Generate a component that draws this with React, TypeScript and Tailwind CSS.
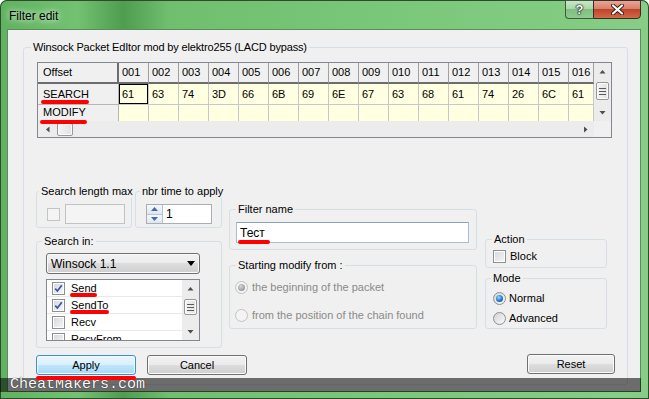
import type { ReactNode } from "react";

const COLS = Array.from({ length: 16 }, (_, i) => String(i + 1).padStart(3, "0"));
const SEARCH = ["61", "63", "74", "3D", "66", "6B", "69", "6E", "67", "63", "68", "61", "74", "26", "6C", "61"];

function RedMark({ className }: { className: string }) {
  return <span className={`absolute z-10 h-[4px] rounded-full bg-[#ff0000] blur-[0.6px] ${className}`} />;
}

function Arrow({ dir }: { dir: "up" | "down" | "left" | "right" }) {
  const d =
    dir === "up" ? "M0.5 4.5 L3.5 1 L6.5 4.5 Z" :
    dir === "down" ? "M0.5 1 L3.5 4.5 L6.5 1 Z" :
    dir === "left" ? "M4.5 0.5 L1 3.5 L4.5 6.5 Z" :
    "M1 0.5 L4.5 3.5 L1 6.5 Z";
  const vertical = dir === "up" || dir === "down";
  return (
    <svg width={vertical ? 7 : 6} height={vertical ? 6 : 7} viewBox={vertical ? "0 0 7 6" : "0 0 6 7"}>
      <path d={d} fill="#4d4d4d" />
    </svg>
  );
}

function Thumb({ className, grip = false }: { className: string; grip?: boolean }) {
  return (
    <div className={`rounded-[2px] border border-[#979797] bg-[linear-gradient(90deg,#f4f4f4,#e2e2e2)] shadow-[inset_0_0_0_1px_#fbfbfb] flex flex-col items-center justify-center gap-[2px] ${className}`}>
      {grip && (
        <>
          <span className="w-[7px] h-px bg-[#5a5a5a]" />
          <span className="w-[7px] h-px bg-[#5a5a5a]" />
          <span className="w-[7px] h-px bg-[#5a5a5a]" />
        </>
      )}
    </div>
  );
}

function Check({ checked = false, disabled = false }: { checked?: boolean; disabled?: boolean }) {
  return (
    <span
      className={`w-[13px] h-[13px] shrink-0 border flex items-center justify-center ${
        disabled
          ? "border-[#c4c4c4] bg-[#f4f4f4]"
          : "border-[#8e8f8f] bg-[linear-gradient(135deg,#d4d7dc,#f7f7f7)] shadow-[inset_0_0_0_1px_#fff]"
      }`}
    >
      {checked && (
        <svg width="9" height="9" viewBox="0 0 9 9">
          <path d="M1.2 4.6 L3.4 7 L7.8 1.3" stroke="#3a56a0" strokeWidth="1.7" fill="none" />
        </svg>
      )}
    </span>
  );
}

function Radio({ checked = false, disabled = false }: { checked?: boolean; disabled?: boolean }) {
  return (
    <span
      className={`w-[13px] h-[13px] shrink-0 rounded-full border flex items-center justify-center ${
        disabled
          ? "border-[#c2c2c2] bg-[#f4f4f4]"
          : "border-[#8e8f8f] bg-[linear-gradient(135deg,#d0d3d8,#fafafa)]"
      }`}
    >
      {checked && (
        <span
          className={`w-[7px] h-[7px] rounded-full ${
            disabled
              ? "bg-[radial-gradient(circle_at_40%_35%,#d8d8d8,#9a9a9a_70%)]"
              : "bg-[radial-gradient(circle_at_40%_35%,#9ad8ff,#1f78cf_55%,#0b3f80)]"
          }`}
        />
      )}
    </span>
  );
}

// Win7-style group box: the frame line runs through the middle of the caption
function GroupBox({ label, legend, className, inner = "", children }: { label: string; legend: string; className: string; inner?: string; children?: ReactNode }) {
  return (
    <fieldset className={`min-w-0 border border-[#d5dfe5] rounded-[3px] ${className}`}>
      <legend className={`px-[2px] leading-[13px] whitespace-nowrap ${legend}`}>{label}</legend>
      <div className={inner}>{children}</div>
    </fieldset>
  );
}

function Btn({ label, className, focused = false }: { label: string; className: string; focused?: boolean }) {
  return (
    <div
      className={`h-[20px] rounded-[3px] border flex items-center justify-center ${
        focused
          ? "border-[#3c8fd0] bg-[linear-gradient(#eaf6fd_0%,#d9f0fc_50%,#bee6fd_50%,#a7d9f5_100%)] shadow-[inset_0_0_0_1px_#f4fbff]"
          : "border-[#707070] bg-[linear-gradient(#f2f2f2_0%,#ebebeb_50%,#dddddd_50%,#cfcfcf_100%)] shadow-[inset_0_0_0_1px_#fbfbfb]"
      } ${className}`}
    >
      {label}
    </div>
  );
}

function PacketGrid() {
  return (
    <div className="ml-[1px] mt-[8px] w-[575px] h-[76px] border border-[#828790] bg-white flex flex-col">
      <div className="flex h-[58px]">
        <div className="w-[556px] grid grid-cols-[81px_repeat(15,30px)_25px] grid-rows-[21px_21px_16px]">
          <div className="bg-[#f0f0f0] border-r-2 border-b-2 border-[#6d6d6d] flex items-center pl-[5px]">Offset</div>
          {COLS.map((c) => (
            <div key={c} className="bg-[#f0f0f0] border-r border-r-[#a0a0a0] border-b-2 border-b-[#6d6d6d] flex items-center pl-[3px]">
              {c}
            </div>
          ))}
          <div className="relative bg-[#f0f0f0] border-r border-b border-[#b5b5b5] flex items-center pl-[5px]">
            SEARCH
            <RedMark className="left-[3px] top-[16px] w-[48px]" />
          </div>
          {SEARCH.map((v, i) => (
            <div
              key={i}
              className={`bg-[#ffffe1] border-r border-b border-[#c8c8c8] flex items-center pl-[3px] ${
                i === 0 ? "shadow-[inset_0_0_0_1px_#000]" : ""
              }`}
            >
              {v}
            </div>
          ))}
          <div className="relative bg-[#f0f0f0] border-r border-[#b5b5b5] flex items-center pl-[5px]">
            <span className="-mt-[1px]">MODIFY</span>
            <RedMark className="left-[2px] top-[15px] w-[47px]" />
          </div>
          {COLS.map((c) => (
            <div key={c} className="bg-[#ffffe1] border-r border-[#c8c8c8]" />
          ))}
        </div>
        <div className="w-[17px] bg-[#ececec] flex flex-col items-center">
          <div className="h-[17px] flex items-center justify-center"><Arrow dir="up" /></div>
          <Thumb grip className="w-[13px] h-[18px] mt-[2px]" />
          <div className="flex-1" />
          <div className="h-[17px] flex items-center justify-center"><Arrow dir="down" /></div>
        </div>
      </div>
      <div className="flex h-[16px]">
        <div className="w-[556px] bg-[#ececec] flex items-center">
          <div className="w-[17px] flex justify-center pl-[2px]"><Arrow dir="left" /></div>
          <Thumb className="ml-[2px] w-[16px] h-[13px]" />
          <div className="flex-1" />
          <div className="w-[17px] flex justify-center"><Arrow dir="right" /></div>
        </div>
        <div className="w-[17px] bg-[#f0f0f0]" />
      </div>
    </div>
  );
}

function ProtocolList() {
  const items = [
    { name: "Send", checked: true, mark: "w-[27px]" },
    { name: "SendTo", checked: true, mark: "w-[39px]" },
    { name: "Recv", checked: false, mark: "" },
    { name: "RecvFrom", checked: false, mark: "" },
  ];
  return (
    <div className="mt-[5px] w-[154px] h-[62px] border border-[#828790] bg-white flex overflow-hidden">
      <div className="flex-1 flex flex-col">
        {items.map((it) => (
          <div key={it.name} className="h-[17px] shrink-0 border-b border-[#e8e8e8] flex items-center pl-[5px] gap-[6px]">
            <Check checked={it.checked} />
            <span className="relative">
              {it.name}
              {it.mark && <RedMark className={`-left-[1px] top-[13px] ${it.mark}`} />}
            </span>
          </div>
        ))}
      </div>
      <div className="w-[17px] bg-[#ececec] flex flex-col items-center">
        <div className="h-[17px] flex items-center justify-center"><Arrow dir="up" /></div>
        <Thumb grip className="w-[13px] h-[16px] mt-[2px]" />
        <div className="flex-1" />
        <div className="h-[17px] flex items-center justify-center"><Arrow dir="down" /></div>
      </div>
    </div>
  );
}

export default function App() {
  return (
    <div className="relative w-[649px] h-[399px] overflow-hidden rounded-t-[7px] bg-[linear-gradient(90deg,#5fb25f_0%,#72c272_12%,#4f9d4f_19%,#6fbf6f_26%,#78c778_55%,#86ce86_100%)] shadow-[inset_0_0_0_1px_#2f4a2f] font-['Liberation_Sans',Arial,sans-serif] text-[11px] text-black">
      {/* title bar */}
      <div className="h-[29px] flex justify-between">
        <div className="pl-[9px] pt-[7px] text-[12px] [text-shadow:0_0_6px_rgba(255,255,255,0.9),0_0_10px_rgba(255,255,255,0.6)]">
          Filter edit
        </div>
        <div className="mr-[8px] flex items-start">
          <div className="w-[28px] h-[19px] border border-[#3b5b3b] border-r-0 rounded-bl-[4px] bg-[linear-gradient(#c9e7c9_0%,#a6d6a6_50%,#7fbf7f_50%,#8fcb8f_100%)] flex items-center justify-center text-[13px] font-bold text-white [text-shadow:0_0_1px_#000,0_0_1px_#000,0_0_2px_#000]">
            ?
          </div>
          <div className="w-[48px] h-[19px] border border-[#3b2b2b] rounded-br-[4px] bg-[linear-gradient(#e8a693_0%,#d77c65_50%,#c0432b_50%,#d26a48_100%)] flex items-center justify-center">
            <svg width="13" height="11" viewBox="0 0 13 11">
              <path d="M2 1.5 L11 9.5 M11 1.5 L2 9.5" stroke="#3a1a10" strokeWidth="4" strokeLinecap="round" />
              <path d="M2 1.5 L11 9.5 M11 1.5 L2 9.5" stroke="#fff" strokeWidth="2.2" strokeLinecap="round" />
            </svg>
          </div>
        </div>
      </div>

      {/* body */}
      <div className="h-[363px] flex pl-[7px] pr-[8px]">
        <div className="flex-1 border border-[#5f8a5f] bg-[#f0f0f0] overflow-hidden">
          <fieldset className="ml-[15px] mt-[11px] w-[605px] h-[344px] min-w-0 border border-[#d5dfe5] rounded-[3px]">
            <legend className="ml-[7px] px-[2px] leading-[13px] tracking-[-0.15px]">Winsock Packet EdItor mod by elektro255 (LACD bypass)</legend>
            <div className="pl-[12px]">
              <PacketGrid />

              <div className="mt-[47px] flex items-start">
                {/* left column */}
                <div className="w-[186px] flex flex-col">
                  <div className="flex gap-[3px]">
                    <GroupBox label="Search length max" legend="ml-[2px] px-[1px]" className="w-[96px] h-[43px]" inner="mt-[6px] pl-[10px] flex items-center gap-[5px]">
                      <Check disabled />
                      <div className="w-[60px] h-[20px] border border-[#c2c2c2] bg-[#f4f4f4]" />
                    </GroupBox>
                    <GroupBox label="nbr time to apply" legend="ml-[4px]" className="w-[87px] h-[43px]" inner="mt-[6px] pl-[10px]">
                      <div className="w-[66px] h-[20px] border border-[#abadb3] bg-white flex items-center">
                        <div className="w-[16px] h-full flex flex-col border-r border-[#b8c4d4]">
                          <div className="flex-1 flex items-center justify-center bg-[linear-gradient(#f4f8fc,#dde7f2)] border-b border-[#b8c4d4]">
                            <svg width="7" height="4" viewBox="0 0 7 4"><path d="M0 4 L3.5 0 L7 4 Z" fill="#4b6a9b" /></svg>
                          </div>
                          <div className="flex-1 flex items-center justify-center bg-[linear-gradient(#f4f8fc,#dde7f2)]">
                            <svg width="7" height="4" viewBox="0 0 7 4"><path d="M0 0 L3.5 4 L7 0 Z" fill="#4b6a9b" /></svg>
                          </div>
                        </div>
                        <span className="pl-[3px] text-[12px]">1</span>
                      </div>
                    </GroupBox>
                  </div>
                  <GroupBox label="Search in:" legend="ml-[5px]" className="mt-[7px] w-[186px] h-[113px]" inner="pl-[9px]">
                    <div className="mt-[5px] w-[154px] h-[21px] rounded-[3px] border border-[#707070] bg-[linear-gradient(#f2f2f2_0%,#ebebeb_50%,#dddddd_50%,#cfcfcf_100%)] shadow-[inset_0_0_0_1px_#fbfbfb] flex items-center justify-between pl-[4px] pr-[4px] text-[12px]">
                      Winsock 1.1
                      <svg width="8" height="5" viewBox="0 0 8 5"><path d="M0 0 L8 0 L4 5 Z" fill="#000" /></svg>
                    </div>
                    <ProtocolList />
                  </GroupBox>
                </div>

                {/* middle column */}
                <div className="ml-[7px] mt-[18px] w-[248px] flex flex-col">
                  <GroupBox label="Filter name" legend="ml-[6px]" className="h-[47px]" inner="pl-[6px]">
                    <div className="relative mt-[6px] w-[233px] h-[21px] border border-[#a9bdd3] border-t-[#8aa3bf] bg-white flex items-center pl-[3px] text-[12px]">
                      Тест
                      <RedMark className="left-[1px] top-[17px] w-[32px]" />
                    </div>
                  </GroupBox>
                  <GroupBox label="Starting modify from :" legend="ml-[6px]" className="mt-[9px] h-[70px]" inner="pl-[5px] text-[#8a8a8a]">
                    <div className="mt-[8px] h-[14px] flex items-center gap-[4px]">
                      <Radio checked disabled />
                      the beginning of the packet
                    </div>
                    <div className="mt-[14px] h-[14px] flex items-center gap-[4px]">
                      <Radio disabled />
                      from the position of the chain found
                    </div>
                  </GroupBox>
                </div>

                {/* right column */}
                <div className="ml-[8px] mt-[48px] w-[122px] flex flex-col">
                  <GroupBox label="Action" legend="ml-[6px]" className="h-[35px]" inner="mt-[2px] pl-[7px] flex items-center gap-[4px]">
                    <Check />
                    Block
                  </GroupBox>
                  <GroupBox label="Mode" legend="ml-[5px]" className="mt-[4px] h-[57px]" inner="pl-[7px]">
                    <div className="mt-[6px] h-[14px] flex items-center gap-[3px]">
                      <Radio checked />
                      Normal
                    </div>
                    <div className="mt-[6px] h-[14px] flex items-center gap-[3px]">
                      <Radio />
                      Advanced
                    </div>
                  </GroupBox>
                </div>
              </div>

              {/* buttons */}
              <div className="mt-[7px] flex items-start pr-[12px]">
                <div className="relative">
                  <Btn label="Apply" focused className="w-[100px]" />
                  <RedMark className="left-0 top-[21px] w-[100px]" />
                </div>
                <Btn label="Cancel" className="ml-[11px] w-[100px]" />
                <Btn label="Reset" className="ml-auto -mt-[1px] w-[88px]" />
              </div>
            </div>
          </fieldset>
        </div>
      </div>

      {/* watermark strip over the bottom */}
      <div className="absolute left-0 bottom-[7px] w-[641px] h-[14px] bg-black/55 pl-[10px] font-['Liberation_Mono',monospace] text-[15px] leading-[14px] text-white [text-shadow:0_0_1px_#000]">
        CheatMakers.com
      </div>
    </div>
  );
}
